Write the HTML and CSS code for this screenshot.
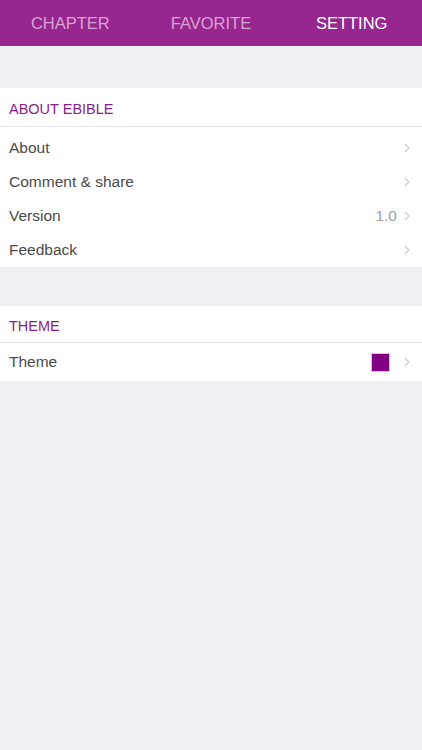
FILE: index.html
```html
<!DOCTYPE html>
<html lang="en">
<head>
    <meta charset="UTF-8">
    <meta name="viewport" content="width=device-width, initial-scale=1.0">
    <title>eBible setting</title>
    <link rel="stylesheet" href="styles.css">
</head>
<body>
 <div class="tabs">
  <div class="tab">CHAPTER</div>
  <div class="tab">FAVORITE</div>
  <div class="tab active">SETTING</div>
 </div>

 <div class="section">
  <div class="section-title">ABOUT EBIBLE</div>
  <div class="list first">
   <div class="row"><span class="label">About</span><span class="right"><svg class="chev" viewBox="0 0 6 10"><path d="M1 1 L5 5 L1 9"/></svg></span></div>
   <div class="row"><span class="label">Comment &amp; share</span><span class="right"><svg class="chev" viewBox="0 0 6 10"><path d="M1 1 L5 5 L1 9"/></svg></span></div>
   <div class="row"><span class="label">Version</span><span class="right"><span class="value">1.0</span><svg class="chev" viewBox="0 0 6 10"><path d="M1 1 L5 5 L1 9"/></svg></span></div>
   <div class="row"><span class="label">Feedback</span><span class="right"><svg class="chev" viewBox="0 0 6 10"><path d="M1 1 L5 5 L1 9"/></svg></span></div>
  </div>
 </div>

 <div class="section">
  <div class="section-title small">THEME</div>
  <div class="list">
   <div class="row tall"><span class="label">Theme</span><span class="right"><span class="swatch"></span><svg class="chev" viewBox="0 0 6 10"><path d="M1 1 L5 5 L1 9"/></svg></span></div>
  </div>
 </div>
</body>
</html>
```

FILE: styles.css
```css
body{
    margin:0;
    background-color:#efeff4;
    font-family:"Liberation Sans", Arial, sans-serif;
    height:750px;
}
.tabs{
    height:46px;
    display:flex;
    background-color:#97268f;
}
.tab{
    flex:1;
    display:flex;
    align-items:center;
    justify-content:center;
    padding-top:1px;
    font-size:16.5px;
    color:#d9a3d5;
}
.tab.active{color:#ffffff}

.section{
    margin-top:42px;
    background-color:#ffffff;
}
.section + .section{margin-top:39px}
.section-title{
    height:34px;
    padding-top:4px;
    display:flex;
    align-items:center;
    padding-left:9px;
    font-size:14.5px;
    color:#8a1e86;
    border-bottom:1px solid #e3e3e8;
}
.section-title.small{height:33px; padding-top:3px}
.list.first{padding-top:4px}
.row{
    height:34px;
    display:flex;
    align-items:center;
    justify-content:space-between;
    padding-left:9px;
    padding-right:12px;
}
.row.tall{height:38px}
.label{
    font-size:15.5px;
    color:#4a4a4a;
}
.right{
    display:flex;
    align-items:center;
}
.value{
    font-size:15.5px;
    color:#a0a0a0;
    margin-right:7px;
}
.swatch{
    width:17px;
    height:17px;
    background-color:#820082;
    border:1px solid #e7b8e6;
    margin-right:14px;
}
.chev{
    width:6px;
    height:10px;
    fill:none;
    stroke:#c7c7cc;
    stroke-width:1.1;
}
```
